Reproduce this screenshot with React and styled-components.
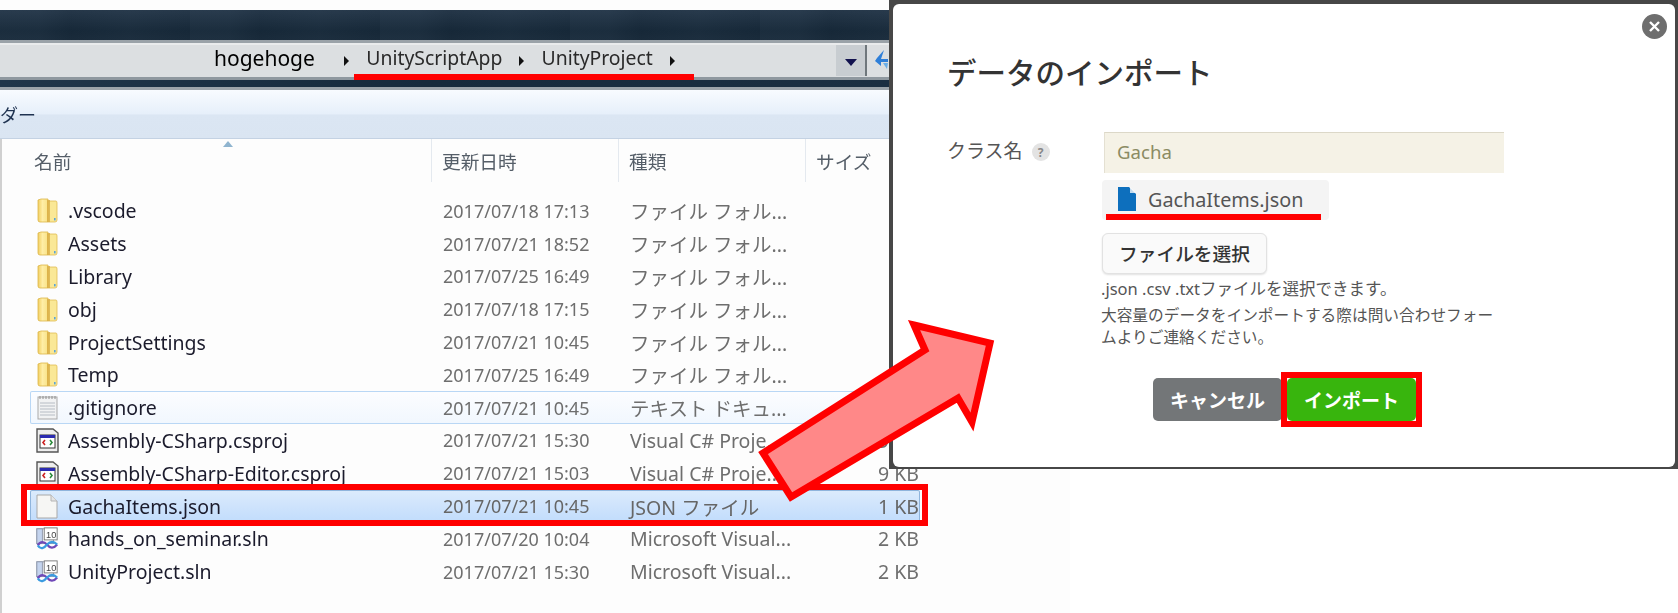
import React from "react";
import styled, { createGlobalStyle } from "styled-components";

const GlobalStyle = createGlobalStyle`
  html, body {
    margin: 0;
    padding: 0;
    background: #fff;
  }
`;

const uiFont = `"Noto Sans", "Noto Sans CJK JP", sans-serif`;

const Page = styled.div`
  position: relative;
  width: 1678px;
  height: 613px;
  overflow: hidden;
  background: #fff;
  font-family: ${uiFont};
`;

const Explorer = styled.div`
  display: flex;
  flex-direction: column;
  width: 1070px;
  height: 100%;
  padding-top: 10px;
  box-sizing: border-box;
  background: #fdfdfd;
  filter: blur(0.35px);
`;

const TitleBand = styled.div`
  height: 30px;
  background:
    repeating-linear-gradient(90deg, rgba(70, 90, 110, 0.1) 0 40px, rgba(20, 35, 50, 0.05) 70px, rgba(70, 90, 110, 0.08) 130px, rgba(20, 35, 50, 0) 190px),
    linear-gradient(#26384a, #162838 70%, #1a2b3b);
`;

const AddressBar = styled.div`
  display: flex;
  align-items: center;
  height: 34px;
  border-top: 3px solid #9aa2a8;
  border-bottom: 3px solid #8f989f;
  background: #dcdfe1;
  box-shadow: inset 0 2px 0 #e9ebec;
`;

const CrumbText = styled.span`
  padding-bottom: 4px;
  font-size: ${(p) => (p.$dim ? "19.4px" : "21px")};
  line-height: 28px;
  color: ${(p) => (p.$dim ? "#2a2a2a" : "#000")};
`;

const CrumbArrow = styled.span`
  width: 0;
  height: 0;
  margin-top: 1px;
  border-left: 5px solid #111;
  border-top: 5px solid transparent;
  border-bottom: 5px solid transparent;
`;

const CrumbRoot = styled.div`
  display: flex;
  align-items: center;
  margin-left: 214px;
  gap: 29px;
`;

const CrumbMarked = styled.div`
  position: relative;
  display: flex;
  align-items: center;
  gap: 17px;
  margin-left: 17.4px;

  &::after {
    content: "";
    position: absolute;
    left: -12px;
    width: 340px;
    bottom: -4px;
    height: 6px;
    background: #f00;
  }
`;

const DropButton = styled.div`
  display: flex;
  align-items: center;
  justify-content: center;
  width: 29px;
  height: 31px;
  margin-left: auto;
  background: #c8cdd1;
  border-right: 2px solid #6f777c;

  &::before {
    content: "";
    border-top: 7px solid #12124e;
    border-left: 6px solid transparent;
    border-right: 6px solid transparent;
    margin-top: 4px;
  }
`;

const RefreshSlot = styled.div`
  display: flex;
  align-items: center;
  width: 203px;
  padding-left: 7px;
  box-sizing: border-box;
`;

const DarkStrip = styled.div`
  height: 7px;
  background: linear-gradient(90deg, #20364a, #162a3c 40%, #1d3144);
  border-bottom: 3px solid #9ca4aa;
`;

const Toolbar = styled.div`
  display: flex;
  align-items: center;
  height: 48px;
  background: linear-gradient(#f8fbff 0, #e6effa 50%, #dbe6f3 52%, #dae5f2 100%);
  border-bottom: 1px solid #c4d2e3;
  font-size: 18px;
  color: #1e3250;
`;

const Body = styled.div`
  flex: 1;
  border-left: 2px solid #d0d0d0;
`;

const columns = `402px 187px 187px 114px`;

const HeaderRow = styled.div`
  display: grid;
  grid-template-columns: ${columns};
  width: 890px;
  height: 43px;
  margin-left: 28px;
  margin-bottom: 12.5px;
  position: relative;
`;

const HeaderCell = styled.div`
  display: flex;
  align-items: center;
  padding-left: ${(p) => p.$pad}px;
  font-size: 18.7px;
  color: #555e68;
  border-right: 1px solid #e4e9ef;
`;

const SortCaret = styled.span`
  position: absolute;
  left: 193px;
  top: 2px;
  border-bottom: 6px solid #8fb4cf;
  border-left: 5px solid transparent;
  border-right: 5px solid transparent;
`;

const Row = styled.div`
  position: relative;
  display: grid;
  grid-template-columns: ${columns};
  align-items: center;
  width: 890px;
  height: 32.8px;
  margin-left: 28px;
  box-sizing: border-box;
  font-size: 19.5px;
  color: #6e6e6e;

  ${(p) =>
    p.$hover &&
    `
    background: linear-gradient(#fcfdff, #f1f7fe);
    box-shadow: inset 0 0 0 1px #b9d7f5;
    border-radius: 2px;
  `}
  ${(p) =>
    p.$selected &&
    `
    background: linear-gradient(#dcebfc, #c1dcfc);
    box-shadow: inset 0 0 0 1px #8fb4dc;
    border-radius: 2px;
    color: #666;
    &::after {
      content: "";
      position: absolute;
      left: -9px;
      right: -8px;
      top: -6px;
      bottom: -4px;
      border: 6px solid #f00;
    }
  `}
`;

const NameCell = styled.div`
  display: flex;
  align-items: center;
  gap: 9px;
  padding-left: 5px;
  color: #1b1b2c;
`;

const IconBox = styled.span`
  display: flex;
  justify-content: center;
  width: 24px;
  flex: none;
`;

const DateCell = styled.div`
  padding-left: 11px;
  font-size: 18px;
`;

const TypeCell = styled.div`
  padding-left: 11px;
  white-space: nowrap;
`;

const SizeCell = styled.div`
  text-align: right;
  padding-right: 1px;
`;

const ModalFrame = styled.div`
  position: absolute;
  left: 889px;
  top: 0;
  width: 789px;
  height: 469px;
  padding: 4px 3px 2px 4px;
  box-sizing: border-box;
  background: #474747;
  display: flex;
`;

const Modal = styled.div`
  position: relative;
  flex: 1;
  padding: 47px 56px 0 54px;
  background: #fff;
  border-radius: 6px;
  color: #333;
`;

const CloseButton = styled.div`
  position: absolute;
  top: 10px;
  right: 8px;
  width: 25px;
  height: 25px;
  border-radius: 50%;
  background: #6e6e6e;
  display: flex;
  align-items: center;
  justify-content: center;
`;

const ModalTitle = styled.h2`
  margin: 0 0 41px;
  font-size: 29.5px;
  line-height: 40px;
  font-weight: 500;
  color: #333;
  font-family: "Noto Sans CJK JP", sans-serif;
`;

const FormRow = styled.div`
  display: grid;
  grid-template-columns: 157px 1fr;
`;

const FormLabel = styled.div`
  display: flex;
  align-items: center;
  align-self: start;
  height: 41px;
  padding-bottom: 5px;
  box-sizing: border-box;
  gap: 9px;
  font-size: 19px;
  color: #555;
`;

const HelpBadge = styled.span`
  display: flex;
  align-items: center;
  justify-content: center;
  width: 18px;
  height: 18px;
  margin-top: 4px;
  border-radius: 50%;
  background: #e3e3e3;
  font-size: 12px;
  font-weight: 700;
  color: #888;
`;

const FieldColumn = styled.div`
  display: flex;
  flex-direction: column;
  align-items: flex-start;
`;

const ClassInput = styled.div`
  display: flex;
  align-items: center;
  width: 400px;
  height: 41px;
  padding: 0 0 4px 12px;
  box-sizing: border-box;
  background: #f5f2e6;
  border-top: 1px solid #dcd8c8;
  border-left: 1px solid #e4e0d2;
  font-size: 18.6px;
  color: #8b8b63;
`;

const FileChip = styled.div`
  position: relative;
  display: flex;
  align-items: center;
  gap: 12px;
  width: 227px;
  height: 40px;
  margin: 7px 0 0 -2px;
  padding: 0 0 2px 16px;
  box-sizing: border-box;
  background: #f4f4f4;
  border-radius: 4px;
  font-size: 19.8px;
  color: #555;

  &::after {
    content: "";
    position: absolute;
    left: 4px;
    width: 215px;
    bottom: 0;
    height: 6px;
    background: #f00;
  }
`;

const SelectButton = styled.div`
  display: flex;
  align-items: center;
  justify-content: center;
  width: 165px;
  height: 41px;
  margin: 13px 0 4px -2px;
  padding-bottom: 2px;
  box-sizing: border-box;
  background: #fafafa;
  border: 1px solid #e2e2e2;
  border-radius: 6px;
  box-shadow: 0 1px 2px rgba(0, 0, 0, 0.12);
  font-size: 18.7px;
  font-weight: 500;
  color: #333;
`;

const Hint = styled.p`
  width: 400px;
  margin: 0 0 4px -3px;
  font-size: ${(p) => (p.$wide ? "16.5px" : "15.7px")};
  line-height: 22px;
  color: #555;
`;

const Footer = styled.div`
  display: flex;
  gap: 5px;
  margin-top: 26px;
  padding-left: 206px;
`;

const ActionButton = styled.div`
  position: relative;
  display: flex;
  align-items: center;
  justify-content: center;
  width: 129px;
  height: 43px;
  border-radius: 5px;
  background: ${(p) => (p.$primary ? "#38b50d" : "#737678")};
  color: #fff;
  font-size: 19px;
  font-weight: 700;

  ${(p) =>
    p.$primary &&
    `
    &::after {
      content: "";
      position: absolute;
      inset: -6px;
      border: 6px solid #f00;
    }
  `}
`;

const ArrowLayer = styled.svg`
  position: absolute;
  left: 0;
  top: 0;
  pointer-events: none;
`;

const FolderIcon = () => (
  <svg width="21" height="25" viewBox="0 0 21 25">
    <defs>
      <linearGradient id="folderFill" x1="0" x2="1" y1="0" y2="0">
        <stop offset="0" stopColor="#f2cf62" />
        <stop offset="0.45" stopColor="#ffeea6" />
        <stop offset="1" stopColor="#f8e287" />
      </linearGradient>
    </defs>
    <path d="M1 2 L4 1 H11 V24 H3 Q1 24 1 22 Z" fill="url(#folderFill)" stroke="#dcb548" strokeWidth="0.8" />
    <path d="M11 3 H19 Q20 3 20 5 V22 Q20 24 18 24 H11 Z" fill="#fae896" stroke="#e0bb52" strokeWidth="0.8" />
    <rect x="10" y="2" width="3" height="22" fill="#d9ae45" opacity="0.8" />
    <rect x="17" y="20" width="1.6" height="2.4" fill="#5aa4d6" />
  </svg>
);

const TextIcon = () => (
  <svg width="21" height="25" viewBox="0 0 21 25">
    <rect x="1" y="2" width="19" height="22" fill="#f1f2f3" stroke="#a9a9a9" />
    <path d="M3 1 V4 M6 1 V4 M9 1 V4 M12 1 V4 M15 1 V4 M18 1 V4" stroke="#8c8c8c" />
    <path d="M3 8 H18 M3 11 H18 M3 14 H18 M3 17 H18 M3 20 H18" stroke="#b6bcc4" />
  </svg>
);

const ProjectIcon = () => (
  <svg width="23" height="25" viewBox="0 0 23 25">
    <path d="M1 1 H17 L22 5 V24 H1 Z" fill="#eee" stroke="#555" strokeWidth="1.4" />
    <rect x="4" y="7" width="15" height="13" fill="#fff" stroke="#333" />
    <rect x="4" y="7" width="15" height="3" fill="#2b2bb0" />
    <path d="M9 12 L7 14.5 L9 17" fill="none" stroke="#c22" strokeWidth="1.6" />
    <path d="M14 12 L16 14.5 L14 17" fill="none" stroke="#2a8a3a" strokeWidth="1.6" />
  </svg>
);

const BlankIcon = () => (
  <svg width="22" height="25" viewBox="0 0 22 25">
    <path d="M1 1 H15 L21 7 V24 H1 Z" fill="#f6f6f4" stroke="#a8a8a8" />
    <path d="M15 1 V7 H21" fill="#e4e4e4" stroke="#b4b4b4" />
  </svg>
);

const SolutionIcon = () => (
  <svg width="26" height="25" viewBox="0 0 26 25">
    <rect x="2" y="2" width="18" height="16" fill="#f4f6fa" stroke="#8f98ab" />
    <rect x="2" y="2" width="6" height="16" fill="#c4d4ee" stroke="#8f98ab" />
    <rect x="10" y="1" width="14" height="13" fill="#fff" stroke="#777" />
    <text x="12" y="12" fontSize="10" fontFamily="Liberation Sans, sans-serif" fill="#444">
      10
    </text>
    <path d="M3 20 C6 15 10 16 13 19 C16 23 20 24 24 19" fill="none" stroke="#7049b8" strokeWidth="2.4" />
    <path d="M3 20 C6 25 10 23 13 19 C16 16 20 15 24 19" fill="none" stroke="#3b9be0" strokeWidth="2.4" />
  </svg>
);

const icons = {
  folder: FolderIcon,
  text: TextIcon,
  project: ProjectIcon,
  blank: BlankIcon,
  solution: SolutionIcon,
};

const folderType = "ファイル フォル...";

const files = [
  { name: ".vscode", date: "2017/07/18 17:13", type: folderType, icon: "folder" },
  { name: "Assets", date: "2017/07/21 18:52", type: folderType, icon: "folder" },
  { name: "Library", date: "2017/07/25 16:49", type: folderType, icon: "folder" },
  { name: "obj", date: "2017/07/18 17:15", type: folderType, icon: "folder" },
  { name: "ProjectSettings", date: "2017/07/21 10:45", type: folderType, icon: "folder" },
  { name: "Temp", date: "2017/07/25 16:49", type: folderType, icon: "folder" },
  { name: ".gitignore", date: "2017/07/21 10:45", type: "テキスト ドキュ...", icon: "text", hover: true },
  { name: "Assembly-CSharp.csproj", date: "2017/07/21 15:30", type: "Visual C# Proje...", size: "9 KB", icon: "project" },
  { name: "Assembly-CSharp-Editor.csproj", date: "2017/07/21 15:03", type: "Visual C# Proje...", size: "9 KB", icon: "project" },
  { name: "GachaItems.json", date: "2017/07/21 10:45", type: "JSON ファイル", size: "1 KB", icon: "blank", selected: true },
  { name: "hands_on_seminar.sln", date: "2017/07/20 10:04", type: "Microsoft Visual...", size: "2 KB", icon: "solution" },
  { name: "UnityProject.sln", date: "2017/07/21 15:30", type: "Microsoft Visual...", size: "2 KB", icon: "solution" },
];

export default function App() {
  return (
    <Page>
      <GlobalStyle />
      <Explorer>
        <TitleBand />
        <AddressBar>
          <CrumbRoot>
            <CrumbText>hogehoge</CrumbText>
            <CrumbArrow />
          </CrumbRoot>
          <CrumbMarked>
            <CrumbText $dim>UnityScriptApp</CrumbText>
            <CrumbArrow />
            <CrumbText $dim>UnityProject</CrumbText>
            <CrumbArrow />
          </CrumbMarked>
          <DropButton />
          <RefreshSlot>
            <svg width="16" height="22" viewBox="0 0 16 22">
              <path d="M10 1 L3 9 L1 12 L7 17 L7 13 L14 13 L14 10 L7 10 Z" fill="#2f7fd8" />
              <path d="M9 14 L14 14 L13 20 Z" fill="#6aaee8" />
            </svg>
          </RefreshSlot>
        </AddressBar>
        <DarkStrip />
        <Toolbar>ダー</Toolbar>
        <Body>
          <HeaderRow>
            <HeaderCell $pad={4}>名前</HeaderCell>
            <SortCaret />
            <HeaderCell $pad={10}>更新日時</HeaderCell>
            <HeaderCell $pad={10}>種類</HeaderCell>
            <HeaderCell $pad={10}>サイズ</HeaderCell>
          </HeaderRow>
          {files.map((f) => {
            const Icon = icons[f.icon];
            return (
              <Row key={f.name} $hover={f.hover} $selected={f.selected}>
                <NameCell>
                  <IconBox>
                    <Icon />
                  </IconBox>
                  {f.name}
                </NameCell>
                <DateCell>{f.date}</DateCell>
                <TypeCell>{f.type}</TypeCell>
                <SizeCell>{f.size}</SizeCell>
              </Row>
            );
          })}
        </Body>
      </Explorer>

      <ModalFrame>
        <Modal>
          <CloseButton>
            <svg width="13" height="13" viewBox="0 0 13 13">
              <path d="M2 2 L11 11 M11 2 L2 11" stroke="#fff" strokeWidth="2.4" />
            </svg>
          </CloseButton>
          <ModalTitle>データのインポート</ModalTitle>
          <FormRow>
            <FormLabel>
              クラス名
              <HelpBadge>?</HelpBadge>
            </FormLabel>
            <FieldColumn>
              <ClassInput>Gacha</ClassInput>
              <FileChip>
                <svg width="18" height="24" viewBox="0 0 18 24">
                  <path d="M0 0 H11 L18 7 V24 H0 Z" fill="#0d6fbd" />
                  <path d="M12 0 L18 6 H12 Z" fill="#fff" opacity="0.75" />
                </svg>
                GachaItems.json
              </FileChip>
              <SelectButton>ファイルを選択</SelectButton>
              <Hint $wide>.json .csv .txtファイルを選択できます。</Hint>
              <Hint>大容量のデータをインポートする際は問い合わせフォームよりご連絡ください。</Hint>
            </FieldColumn>
          </FormRow>
          <Footer>
            <ActionButton>キャンセル</ActionButton>
            <ActionButton $primary>インポート</ActionButton>
          </Footer>
        </Modal>
      </ModalFrame>

      <ArrowLayer width="1678" height="613" viewBox="0 0 1678 613">
        <polygon
          points="914,325 990,343 972,422 958,398 791,497 763,453 925,350"
          fill="#ff8888"
          stroke="#ff0000"
          strokeWidth="7"
          strokeMiterlimit="10"
        />
      </ArrowLayer>
    </Page>
  );
}
